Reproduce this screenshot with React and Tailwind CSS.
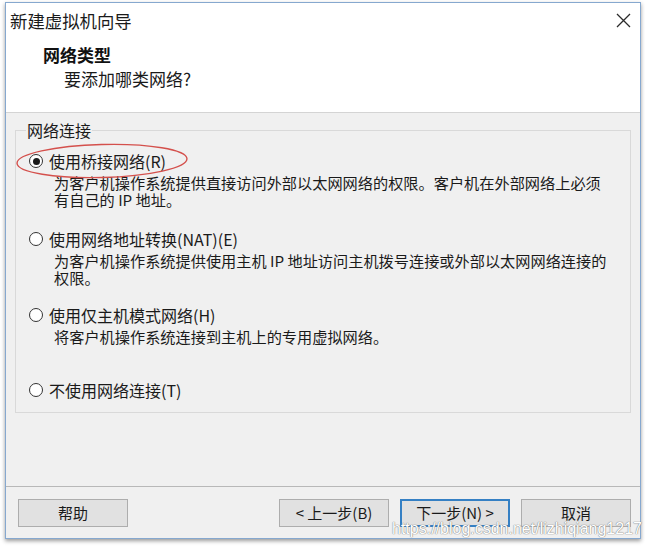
import React from "react";

const font = { fontFamily: '"Noto Sans CJK SC", "Noto Sans", sans-serif' };

function Radio({ checked }) {
  return (
    <span className="flex h-[14px] w-[14px] shrink-0 items-center justify-center rounded-full border border-[#333333] bg-white">
      {checked && <span className="h-[7px] w-[7px] rounded-full bg-[#1a1a1a]" />}
    </span>
  );
}

function Option({ checked, label, lines, className = "" }) {
  return (
    <div className={className}>
      <div className="flex h-[22px] items-center">
        <Radio checked={checked} />
        <span className="ml-[6px] text-[16px] leading-[22px] text-[#1a1a1a]">{label}</span>
      </div>
      {lines && (
        <div className="mt-[2px] pl-[25px] text-[15.2px] leading-[17px] text-[#1a1a1a]">
          {lines.map((l, i) => (
            <div key={i} className="whitespace-nowrap">{l}</div>
          ))}
        </div>
      )}
    </div>
  );
}

function Btn({ children, primary }) {
  return (
    <button
      className={
        "flex h-[28px] w-[110px] items-center justify-center bg-[#e1e1e1] text-[15px] text-[#1a1a1a] " +
        (primary ? "border-2 border-[#3580c4]" : "border border-[#adadad]")
      }
    >
      {children}
    </button>
  );
}

export default function App() {
  return (
    <div className="relative h-[546px] w-[645px] overflow-hidden bg-white" style={font}>
      <div className="ml-[5px] mt-[2px] flex h-[537px] w-[636px] flex-col border border-[#86a8cf] bg-[#f0f0f0] shadow-[0_2px_4px_rgba(0,0,0,0.4)]">
        {/* Title bar */}
        <div className="flex h-[36px] items-center justify-between bg-white pl-[4px] pr-[9px]">
          <span className="text-[17.4px] leading-[22px] text-[#1a1a1a]">新建虚拟机向导</span>
          <svg width="15" height="15" viewBox="0 0 15 15" className="mt-[-1px]">
            <path d="M1 1 L14 14 M14 1 L1 14" stroke="#2b2b2b" strokeWidth="1.3" fill="none" />
          </svg>
        </div>
        {/* Header */}
        <div className="h-[74px] border-b border-[#d4d4d4] bg-white pt-[5px]">
          <div className="pl-[37px] text-[17px] font-bold leading-[22px] text-[#111111]">网络类型</div>
          <div className="mt-[2px] pl-[58px] text-[17px] leading-[22px] text-[#1a1a1a]">要添加哪类网络?</div>
        </div>
        {/* Body */}
        <div className="flex flex-1 flex-col px-[9px] pt-[7px]">
          <fieldset className="border border-[#d9d9d9] px-[13px] pb-[11px]">
            <legend className="ml-[-3px] px-[1px] text-[16px] leading-[20px] text-[#1a1a1a]">网络连接</legend>
            <div className="flex flex-col pt-[10px]">
              <Option
                checked
                label="使用桥接网络(R)"
                lines={[
                  "为客户机操作系统提供直接访问外部以太网网络的权限。客户机在外部网络上必须",
                  "有自己的 IP 地址。",
                ]}
              />
              <Option
                className="mt-[20px]"
                label="使用网络地址转换(NAT)(E)"
                lines={[
                  "为客户机操作系统提供使用主机 IP 地址访问主机拨号连接或外部以太网网络连接的",
                  "权限。",
                ]}
              />
              <Option
                className="mt-[18px]"
                label="使用仅主机模式网络(H)"
                lines={["将客户机操作系统连接到主机上的专用虚拟网络。"]}
              />
              <Option className="mt-[34px]" label="不使用网络连接(T)" />
            </div>
          </fieldset>
        </div>
        {/* Footer */}
        <div className="flex items-center border-t border-[#b8b8b8] pb-[11px] pl-[12px] pr-[9px] pt-[12px]">
          <Btn>帮助</Btn>
          <div className="flex-1" />
          <div className="flex gap-[11px]">
            <Btn>&lt; 上一步(B)</Btn>
            <Btn primary>下一步(N) &gt;</Btn>
            <Btn>取消</Btn>
          </div>
        </div>
      </div>

      {/* red annotation ellipse */}
      <svg className="pointer-events-none absolute left-[14px] top-[141px]" width="176" height="40" viewBox="0 0 176 40">
        <ellipse cx="88" cy="20" rx="85" ry="16.5" fill="none" stroke="#d4504c" strokeWidth="1.4" transform="rotate(-1.5 88 20)" />
      </svg>

      {/* watermark */}
      <div
        className="pointer-events-none absolute left-[392px] top-[519px] whitespace-nowrap text-[16px] leading-[20px] text-white [text-shadow:0_0_1px_#7a7a7a,0_0_1px_#7a7a7a]"
        style={{ fontFamily: '"Liberation Sans", Arial, sans-serif' }}
      >
        https://blog.csdn.net/lizhiqiang1217
      </div>
    </div>
  );
}
